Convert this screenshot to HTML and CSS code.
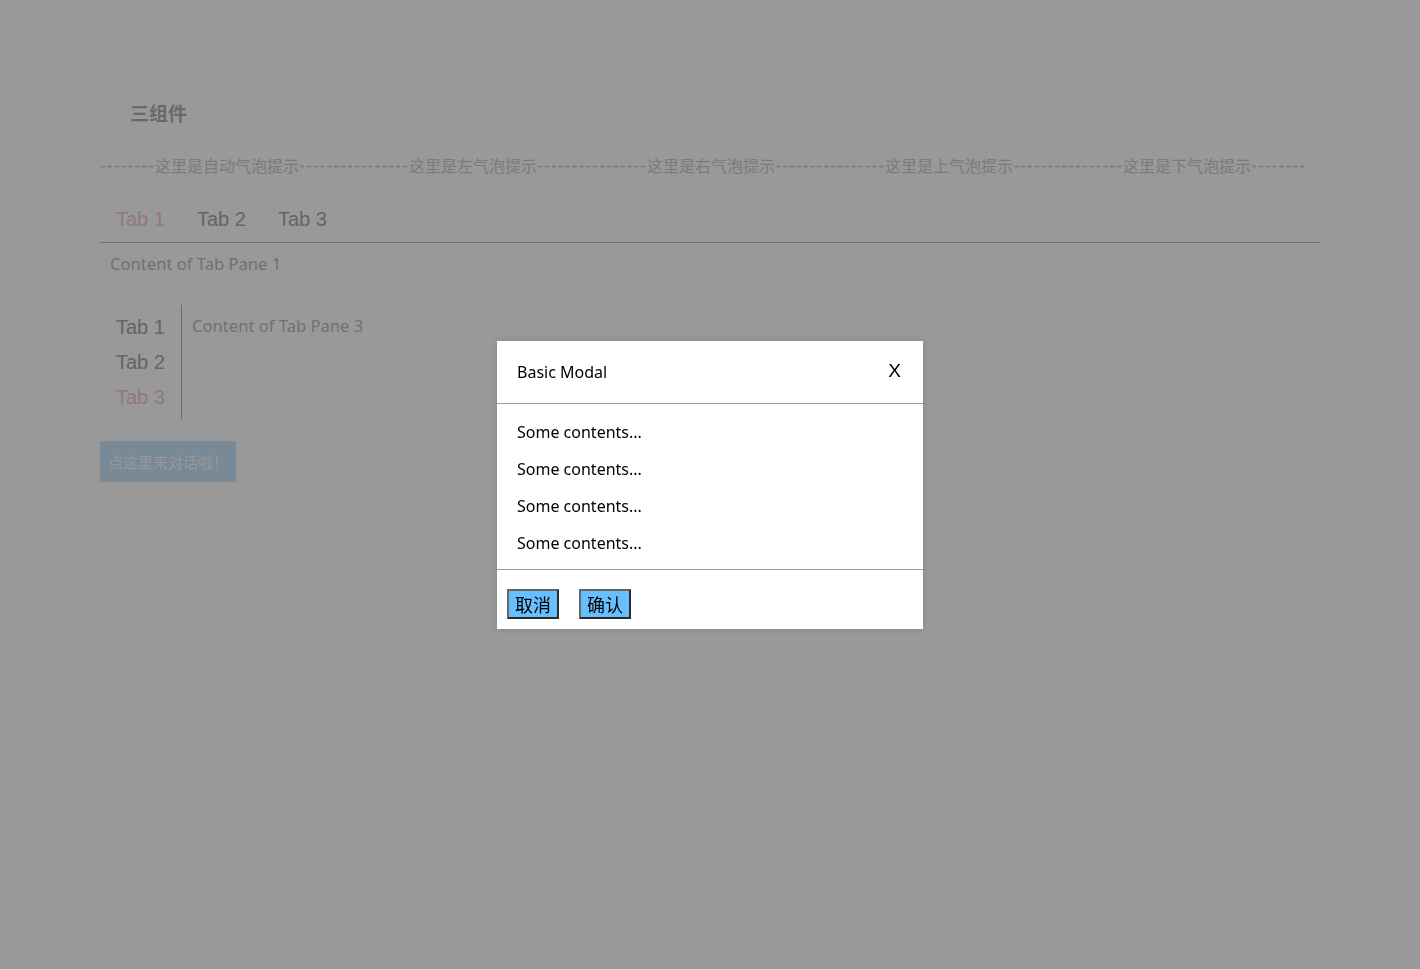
FILE: index.html
```html
<!DOCTYPE html>
<html lang="zh-CN">
<head>
<meta charset="utf-8">
<title>三组件</title>
<link rel="stylesheet" href="styles.css">
</head>
<body>
<div class="page">
  <h3 class="title">三组件</h3>
  <div class="tips">
    <span class="tip"><span class="dash">--------</span>这里是自动气泡提示<span class="dash">--------</span></span><span class="tip"><span class="dash">--------</span>这里是左气泡提示<span class="dash">--------</span></span><span class="tip"><span class="dash">--------</span>这里是右气泡提示<span class="dash">--------</span></span><span class="tip"><span class="dash">--------</span>这里是上气泡提示<span class="dash">--------</span></span><span class="tip"><span class="dash">--------</span>这里是下气泡提示<span class="dash">--------</span></span>
  </div>
  <div class="tabs">
    <div class="tab-nav">
      <span class="tab active">Tab 1</span>
      <span class="tab">Tab 2</span>
      <span class="tab">Tab 3</span>
    </div>
    <div class="tab-pane">Content of Tab Pane 1</div>
  </div>
  <div class="vtabs">
    <div class="vtab-nav">
      <span class="vtab">Tab 1</span>
      <span class="vtab">Tab 2</span>
      <span class="vtab active">Tab 3</span>
    </div>
    <div class="vtab-pane">Content of Tab Pane 3</div>
  </div>
  <button class="open-btn">点这里来对话啦！</button>
</div>
<div class="mask"></div>
<div class="modal-wrap">
  <div class="modal">
    <div class="modal-header">
      <span class="modal-title">Basic Modal</span>
      <span class="modal-close">X</span>
    </div>
    <div class="modal-body">
      <p>Some contents...</p>
      <p>Some contents...</p>
      <p>Some contents...</p>
      <p>Some contents...</p>
    </div>
    <div class="modal-footer">
      <button class="btn">取消</button>
      <button class="btn">确认</button>
    </div>
  </div>
</div>
</body>
</html>
```
FILE: styles.css
```css
html, body {
  margin: 0;
  padding: 0;
  background: #ffffff;
  height: 100%;
}
body {
  font-family: "Noto Sans", "Noto Sans CJK SC", sans-serif;
}
.page {
  padding: 0 100px;
}
.title {
  margin: 0;
  padding: 101px 0 0 30px;
  font-size: 19px;
  line-height: 24px;
  font-weight: bold;
  color: #b0b0b0;
  font-family: "Noto Sans CJK SC", sans-serif;
}
.tips {
  margin-top: 30px;
  height: 20px;
  line-height: 20px;
  font-size: 16px;
  color: #cdcdcd;
  white-space: nowrap;
  font-family: "Noto Sans CJK SC", sans-serif;
  display: flex;
}
.tip {
  display: inline-flex;
  align-items: center;
}
.dash {
  display: inline-block;
  width: 55px;
  font-family: "Liberation Sans", Arial, sans-serif;
  font-size: 18px;
  letter-spacing: 0.875px;
  line-height: 20px;
  position: relative;
  top: 1px;
}
.tabs {
  margin-top: 25px;
}
.tab-nav {
  display: flex;
  height: 42px;
  border-bottom: 1px solid #bababa;
}
.tab {
  padding: 0 16px 0 16px;
  width: 49px;
  font-family: "Liberation Sans", Arial, sans-serif;
  font-size: 20px;
  line-height: 38px;
  color: #a8a8a8;
}
.tab.active, .vtab.active {
  color: #f0c8d2;
}
.tab-pane, .vtab-pane {
  padding: 10px 10px;
  font-size: 16.6px;
  line-height: 22px;
  color: #bcbcbc;
}
.vtabs {
  margin-top: 20px;
  display: flex;
}
.vtab-nav {
  display: flex;
  flex-direction: column;
  padding: 5px 0 4px 16px;
  width: 65px;
  border-right: 1px solid #b4b4b4;
}
.vtab {
  font-family: "Liberation Sans", Arial, sans-serif;
  font-size: 20px;
  line-height: 35px;
  color: #a8a8a8;
}
.open-btn {
  margin-top: 22px;
  height: 41px;
  padding: 0 8px;
  border: none;
  background: #cbe4fa;
  color: #fbfdff;
  font-size: 15px;
  font-family: "Noto Sans CJK SC", sans-serif;
}
.mask {
  position: fixed;
  inset: 0;
  background: rgba(0, 0, 0, 0.4);
}
.modal-wrap {
  position: fixed;
  inset: 0;
  display: flex;
  justify-content: center;
  align-items: flex-start;
  padding-top: 341px;
}
.modal {
  width: 426px;
  background: #ffffff;
  box-shadow: 0 0 8px rgba(0, 0, 0, 0.15);
  color: #000;
}
.modal-header {
  display: flex;
  justify-content: space-between;
  align-items: center;
  padding: 20px;
  border-bottom: 1px solid #9c9c9c;
}
.modal-title {
  font-size: 16px;
  line-height: 22px;
}
.modal-close {
  font-family: "Liberation Sans", Arial, sans-serif;
  font-size: 19px;
  line-height: 22px;
  margin-top: -3px;
  margin-right: 2px;
}
.modal-body {
  padding: 17px 20px 15px;
  display: flex;
  flex-direction: column;
  gap: 15px;
  border-bottom: 1px solid #9c9c9c;
}
.modal-body p {
  margin: 0;
  font-size: 16px;
  line-height: 22px;
}
.modal-footer {
  display: flex;
  gap: 20px;
  padding: 19px 10px 10px;
}
.btn {
  height: 30px;
  padding: 0 6px;
  font-size: 18px;
  line-height: 26px;
  font-family: "Noto Sans CJK SC", sans-serif;
  color: #000;
  background: #66bfff;
  border: 2px solid;
  border-color: #666 #2a2a2a #2a2a2a #666;
}
```
